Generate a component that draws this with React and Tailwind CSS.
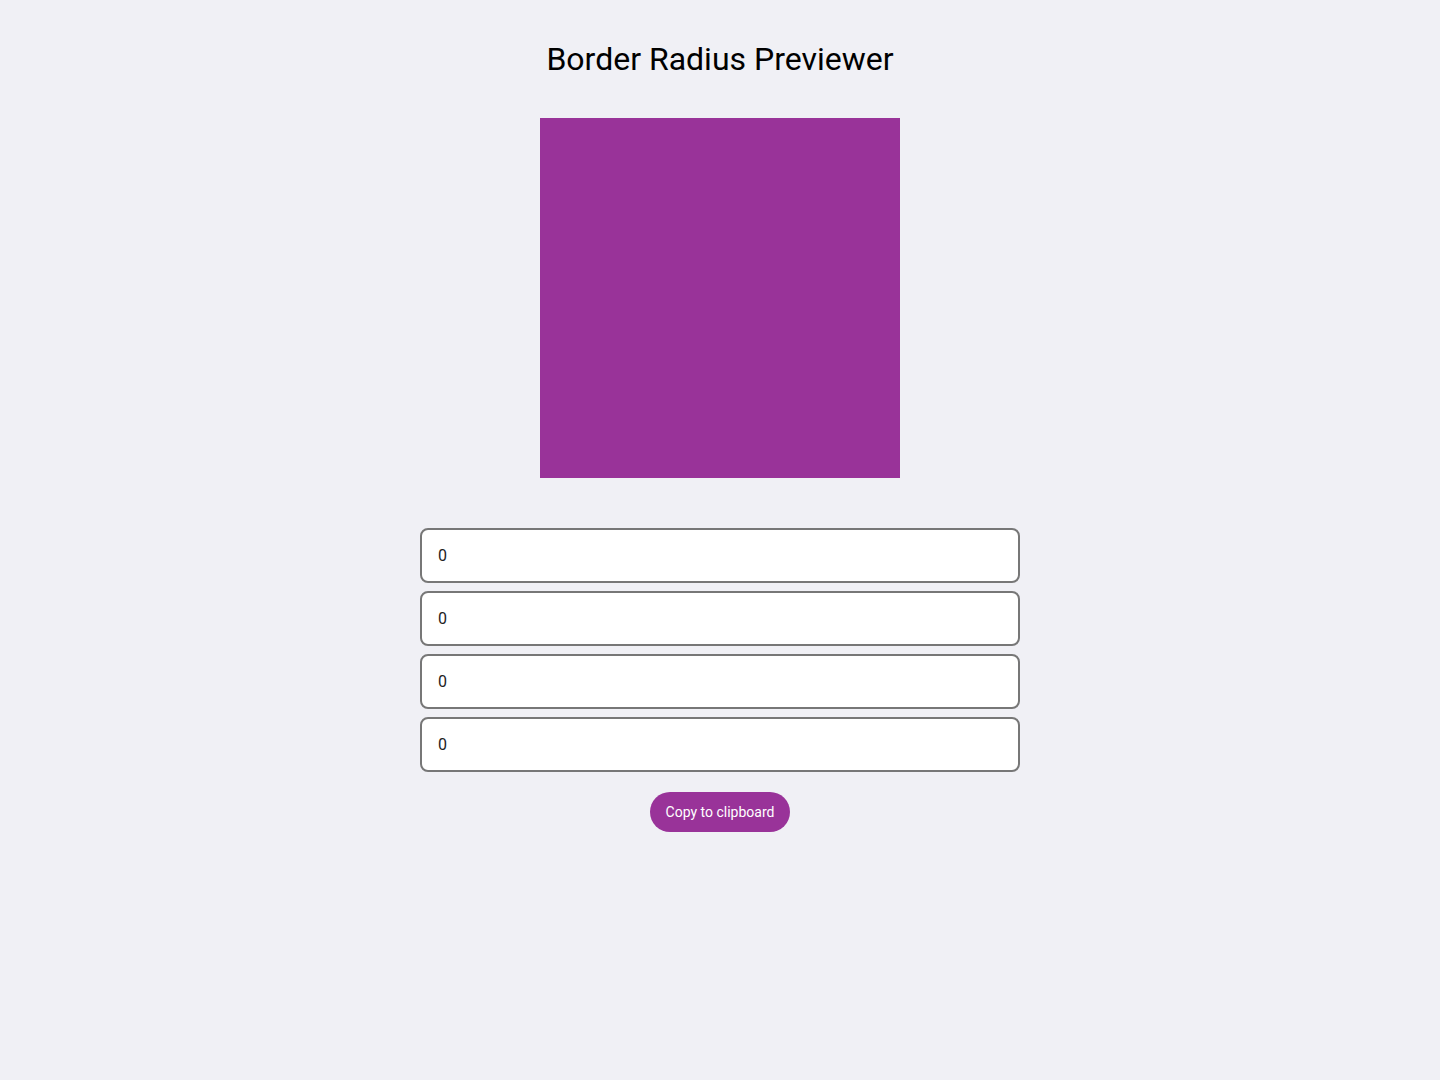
export default function App() {
  const values = [0, 0, 0, 0];
  return (
    <div className="min-h-[1080px] bg-[#f0f0f5] flex flex-col items-center font-['Roboto',sans-serif]">
      <h1 className="mt-[38px] text-[32px] leading-[42px] font-normal text-black">Border Radius Previewer</h1>
      <div className="mt-[38px] w-[360px] h-[360px] bg-[#993399]" />
      <div className="mt-[50px] w-[600px] flex flex-col gap-2">
        {values.map((v, i) => (
          <input
            key={i}
            defaultValue={v}
            className="h-[55px] w-full bg-white border-2 border-[#777] rounded-lg px-4 text-base text-[#222] outline-none"
          />
        ))}
      </div>
      <button className="mt-5 w-[140px] h-10 rounded-full bg-[#993399] text-white text-sm">Copy to clipboard</button>
    </div>
  );
}
